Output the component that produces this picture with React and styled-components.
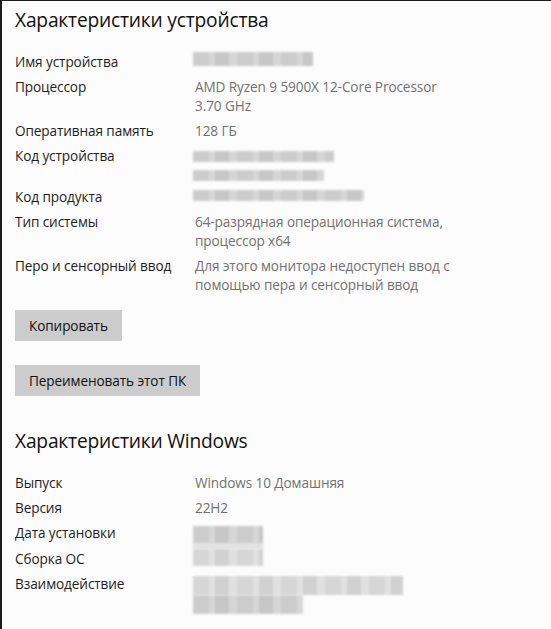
import React from "react";
import styled, { createGlobalStyle } from "styled-components";

const GlobalStyle = createGlobalStyle`
  html, body {
    margin: 0;
    padding: 0;
    background: #fcfcfc;
    overflow: hidden;
  }
  body {
    font-family: "Open Sans", "Noto Sans", "Liberation Sans", sans-serif;
    -webkit-font-smoothing: antialiased;
  }
`;

const deviceSpecs = [
  { label: "Имя устройства", redact: [{ w: 120, h: 14, mt: 0 }] },
  { label: "Процессор", lines: ["AMD Ryzen 9 5900X 12-Core Processor", "3.70 GHz"] },
  { label: "Оперативная память", lines: ["128 ГБ"] },
  {
    label: "Код устройства",
    redact: [
      { w: 141, h: 11, mt: 5 },
      { w: 131, h: 11, mt: 8 },
    ],
  },
  { label: "Код продукта", redact: [{ w: 171, h: 11, mt: 3 }] },
  { label: "Тип системы", lines: ["64-разрядная операционная система,", "процессор x64"] },
  {
    label: "Перо и сенсорный ввод",
    lines: ["Для этого монитора недоступен ввод с", "помощью пера и сенсорный ввод"],
  },
];

const windowsSpecs = [
  { label: "Выпуск", lines: ["Windows 10 Домашняя"] },
  { label: "Версия", lines: ["22H2"] },
  { label: "Дата установки", redact: [{ w: 70, h: 17, mt: 3, tail: true }] },
  { label: "Сборка ОС", redact: [{ w: 70, h: 17, mt: 0, light: true }] },
  {
    label: "Взаимодействие",
    redact: [
      { w: 210, h: 19, mt: 2, light: true },
      { w: 110, h: 19, mt: 0 },
    ],
  },
];

function SpecList({ items }) {
  return (
    <List>
      {items.map((item) => (
        <Row key={item.label}>
          <Label>{item.label}</Label>
          <Value>
            {item.lines &&
              item.lines.map((line) => <Line key={line}>{line}</Line>)}
            {item.redact &&
              item.redact.map((r, i) => (
                <Redacted
                  key={i}
                  $w={r.w}
                  $h={r.h}
                  $mt={r.mt}
                  $light={r.light}
                  $tail={r.tail}
                />
              ))}
          </Value>
        </Row>
      ))}
    </List>
  );
}

export default function App() {
  return (
    <>
      <GlobalStyle />
      <Frame>
        <Section>
          <Title>Характеристики устройства</Title>
          <SpecList items={deviceSpecs} />
          <Button $first>Копировать</Button>
          <Button>Переименовать этот ПК</Button>
        </Section>
        <Section>
          <Title $second>Характеристики Windows</Title>
          <SpecList items={windowsSpecs} />
          <Button $first>Копировать</Button>
        </Section>
      </Frame>
    </>
  );
}

const Frame = styled.div`
  min-height: 100vh;
  box-sizing: border-box;
  border-top: 1px solid #1c1c1c;
  border-left: 2px solid #1c1c1c;
  padding-left: 13px;
`;

const Section = styled.section`
  display: flex;
  flex-direction: column;
  align-items: flex-start;
`;

const Title = styled.h2`
  margin: ${(p) => (p.$second ? "31px" : "5px")} 0 0;
  font-size: 19.2px;
  line-height: 28px;
  font-weight: 400;
  color: #111;
  letter-spacing: -0.2px;
`;

const List = styled.div`
  display: flex;
  flex-direction: column;
  gap: 6px;
  margin-top: 18px;
  align-self: stretch;
`;

const Row = styled.div`
  display: grid;
  grid-template-columns: 180px 1fr;
  font-size: 13.6px;
  line-height: 19px;
`;

const Label = styled.div`
  color: #1e1e1e;
  letter-spacing: -0.1px;
`;

const Value = styled.div`
  color: #727272;
  letter-spacing: -0.1px;
  margin-left: -2px;
  padding-left: 2px;
`;

const Line = styled.div`
  white-space: nowrap;
`;

const Redacted = styled.div`
  margin-left: -2px;
  margin-top: ${(p) => p.$mt}px;
  width: ${(p) => p.$w}px;
  height: ${(p) => p.$h}px;
  background:
    repeating-linear-gradient(
      90deg,
      rgba(0, 0, 0, 0.035) 0 16px,
      rgba(255, 255, 255, 0.1) 16px 22px,
      rgba(0, 0, 0, 0.06) 22px 36px,
      rgba(255, 255, 255, 0.08) 36px 44px
    ),
    ${(p) => (p.$light ? "#dedede" : "#d3d3d3")};
  box-shadow: ${(p) => (p.$tail ? "0 6px 0 0 #e2e2e2" : "none")};
  filter: blur(1px);
`;

const Button = styled.button`
  margin-top: ${(p) => (p.$first ? "16px" : "24px")};
  height: 31px;
  padding: 0 14px;
  border: none;
  border-radius: 0;
  background: #cccccc;
  color: #111;
  font-family: inherit;
  font-size: 13.6px;
  letter-spacing: -0.1px;
  cursor: pointer;
`;
